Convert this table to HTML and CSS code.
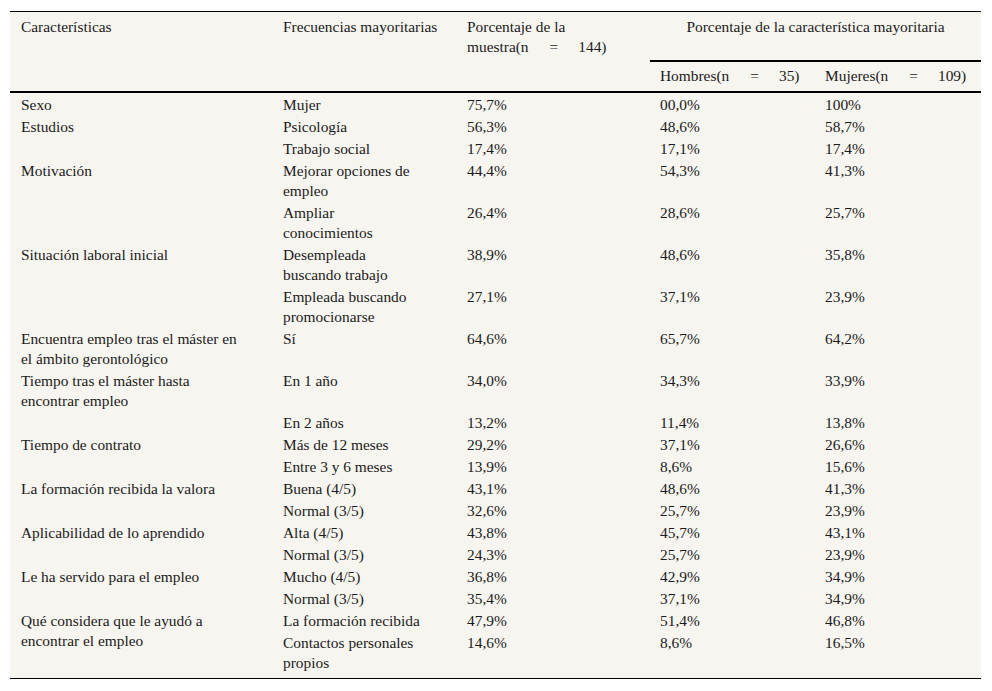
FILE: index.html
```html
<!DOCTYPE html>
<html lang="es">
<head>
<meta charset="utf-8">
<title>Tabla</title>
<link rel="stylesheet" href="styles.css">
</head>
<body>
<div class="page">
<table class="data">
<colgroup>
<col class="c1"><col class="c2"><col class="c3"><col class="c4"><col class="c5">
</colgroup>
<thead>
<tr>
<th rowspan="2" class="first">Características</th>
<th rowspan="2">Frecuencias mayoritarias</th>
<th rowspan="2">Porcentaje de la <span class="nw">muestra(n<span class="eq">=</span>144)</span></th>
<th colspan="2" class="group">Porcentaje de la característica mayoritaria</th>
</tr>
<tr>
<th class="sub">Hombres(n<span class="eq">=</span>35)</th>
<th class="sub">Mujeres(n<span class="eq">=</span>109)</th>
</tr>
</thead>
<tbody>
<tr><td class="first">Sexo</td><td>Mujer</td><td>75,7%</td><td>00,0%</td><td>100%</td></tr>
<tr><td class="first">Estudios</td><td>Psicología</td><td>56,3%</td><td>48,6%</td><td>58,7%</td></tr>
<tr><td class="first"></td><td>Trabajo social</td><td>17,4%</td><td>17,1%</td><td>17,4%</td></tr>
<tr><td class="first">Motivación</td><td>Mejorar opciones de empleo</td><td>44,4%</td><td>54,3%</td><td>41,3%</td></tr>
<tr><td class="first"></td><td>Ampliar conocimientos</td><td>26,4%</td><td>28,6%</td><td>25,7%</td></tr>
<tr><td class="first">Situación laboral inicial</td><td>Desempleada buscando trabajo</td><td>38,9%</td><td>48,6%</td><td>35,8%</td></tr>
<tr><td class="first"></td><td>Empleada buscando promocionarse</td><td>27,1%</td><td>37,1%</td><td>23,9%</td></tr>
<tr><td class="first">Encuentra empleo tras el máster en el ámbito gerontológico</td><td>Sí</td><td>64,6%</td><td>65,7%</td><td>64,2%</td></tr>
<tr><td class="first">Tiempo tras el máster hasta encontrar empleo</td><td>En 1 año</td><td>34,0%</td><td>34,3%</td><td>33,9%</td></tr>
<tr><td class="first"></td><td>En 2 años</td><td>13,2%</td><td>11,4%</td><td>13,8%</td></tr>
<tr><td class="first">Tiempo de contrato</td><td>Más de 12 meses</td><td>29,2%</td><td>37,1%</td><td>26,6%</td></tr>
<tr><td class="first"></td><td>Entre 3 y 6 meses</td><td>13,9%</td><td>8,6%</td><td>15,6%</td></tr>
<tr><td class="first">La formación recibida la valora</td><td>Buena (4/5)</td><td>43,1%</td><td>48,6%</td><td>41,3%</td></tr>
<tr><td class="first"></td><td>Normal (3/5)</td><td>32,6%</td><td>25,7%</td><td>23,9%</td></tr>
<tr><td class="first">Aplicabilidad de lo aprendido</td><td>Alta (4/5)</td><td>43,8%</td><td>45,7%</td><td>43,1%</td></tr>
<tr><td class="first"></td><td>Normal (3/5)</td><td>24,3%</td><td>25,7%</td><td>23,9%</td></tr>
<tr><td class="first">Le ha servido para el empleo</td><td>Mucho (4/5)</td><td>36,8%</td><td>42,9%</td><td>34,9%</td></tr>
<tr><td class="first"></td><td>Normal (3/5)</td><td>35,4%</td><td>37,1%</td><td>34,9%</td></tr>
<tr><td class="first" rowspan="2">Qué considera que le ayudó a encontrar el empleo</td><td>La formación recibida</td><td>47,9%</td><td>51,4%</td><td>46,8%</td></tr>
<tr class="last"><td>Contactos personales propios</td><td>14,6%</td><td>8,6%</td><td>16,5%</td></tr>
</tbody>
</table>
</div>
</body>
</html>
```
FILE: styles.css
```css
html, body {
  margin: 0;
  padding: 0;
  background: #ffffff;
}

.page {
  padding: 11px 11px 12px 10px;
}

.data {
  width: 971px;
  table-layout: fixed;
  border-collapse: separate;
  border-spacing: 0;
  background: #f7f5f0;
  border-top: 1px solid #000;
  border-bottom: 1px solid #000;
  font-family: "Liberation Serif", "Times New Roman", serif;
  font-size: 15.4px;
  line-height: 20px;
  color: #1a1a1a;
}

.c1 { width: 263px; }
.c2 { width: 184px; }
.c3 { width: 193px; }
.c4 { width: 165px; }
.c5 { width: 166px; }

.data th {
  font-weight: normal;
  text-align: left;
  vertical-align: top;
  padding: 5px 10px 0 10px;
  border-bottom: 2px solid #000;
}

.data th.first,
.data td.first {
  padding-left: 11px;
}

.data th.group {
  text-align: center;
  padding-bottom: 23px;
}

.data th.sub {
  padding-top: 4px;
  padding-bottom: 5px;
}

.nw {
  white-space: nowrap;
}

.eq {
  margin: 0 20px 0 21px;
}

.data td {
  vertical-align: top;
  padding: 2px 10px 0 10px;
}

.data td:nth-child(2) {
  padding-right: 33px;
}

.data td.first {
  padding-right: 26px;
}

.data td.first + td {
  padding-right: 33px;
}

.data tr.last td {
  padding-bottom: 5px;
}

.data tr.last td:first-child {
  padding-right: 33px;
}
```
